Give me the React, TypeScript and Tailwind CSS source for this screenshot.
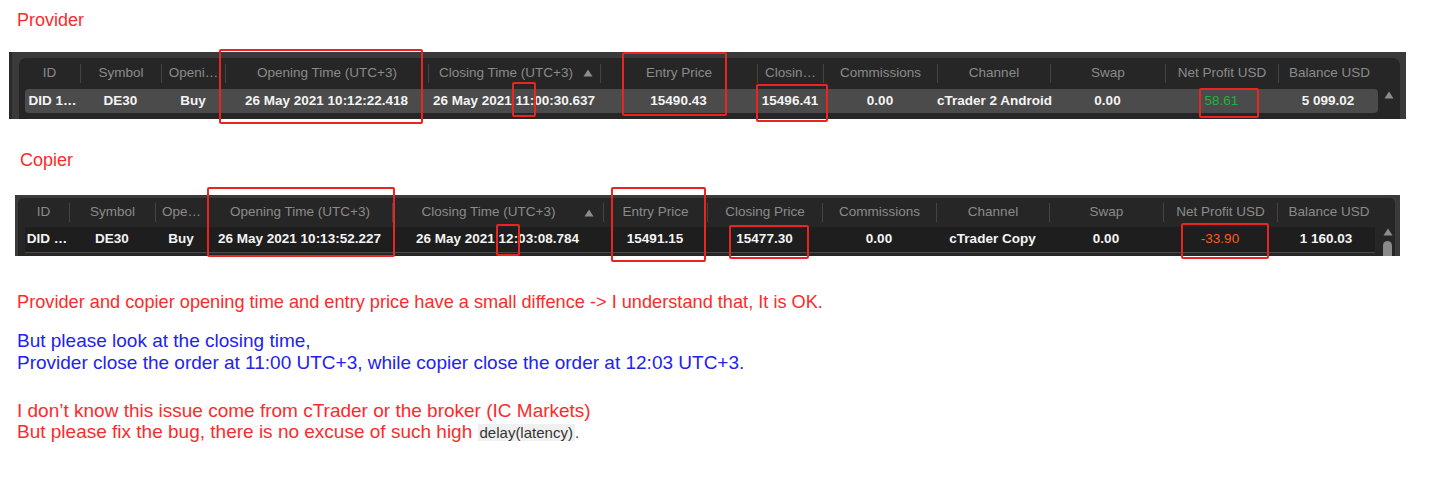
import React from "react";

type Col = {
  label: string;
  w: string;
  rw: string;
  value: string;
  tone?: string;
  sort?: string;
};

const providerCols: Col[] = [
  { label: "ID", w: "w-[61px]", rw: "w-[55px]", value: "DID 1…" },
  { label: "Symbol", w: "w-[81px]", rw: "w-[81px]", value: "DE30" },
  { label: "Openi…", w: "w-[64px]", rw: "w-[64px]", value: "Buy" },
  { label: "Opening Time (UTC+3)", w: "w-[203px]", rw: "w-[203px]", value: "26 May 2021 10:12:22.418" },
  { label: "Closing Time (UTC+3)", w: "w-[172px]", rw: "w-[172px]", value: "26 May 2021 11:00:30.637", sort: "mr-[7px]" },
  { label: "Entry Price", w: "w-[157px]", rw: "w-[157px]", value: "15490.43" },
  { label: "Closin…", w: "w-[66px]", rw: "w-[66px]", value: "15496.41" },
  { label: "Commissions", w: "w-[114px]", rw: "w-[114px]", value: "0.00" },
  { label: "Channel", w: "w-[113px]", rw: "w-[113px]", value: "cTrader 2 Android" },
  { label: "Swap", w: "w-[115px]", rw: "w-[115px]", value: "0.00" },
  { label: "Net Profit USD", w: "w-[113px]", rw: "w-[113px]", value: "58.61", tone: "font-normal text-[#1fb33c]" },
  { label: "Balance USD", w: "w-[102px]", rw: "w-[100px]", value: "5 099.02" },
];

const copierCols: Col[] = [
  { label: "ID", w: "w-[51px]", rw: "w-[44px]", value: "DID …" },
  { label: "Symbol", w: "w-[86px]", rw: "w-[86px]", value: "DE30" },
  { label: "Ope…", w: "w-[52px]", rw: "w-[52px]", value: "Buy" },
  { label: "Opening Time (UTC+3)", w: "w-[185px]", rw: "w-[185px]", value: "26 May 2021 10:13:52.227" },
  { label: "Closing Time (UTC+3)", w: "w-[211px]", rw: "w-[211px]", value: "26 May 2021 12:03:08.784", sort: "mr-[9px]" },
  { label: "Entry Price", w: "w-[104px]", rw: "w-[104px]", value: "15491.15" },
  { label: "Closing Price", w: "w-[115px]", rw: "w-[115px]", value: "15477.30" },
  { label: "Commissions", w: "w-[114px]", rw: "w-[114px]", value: "0.00" },
  { label: "Channel", w: "w-[113px]", rw: "w-[113px]", value: "cTrader Copy" },
  { label: "Swap", w: "w-[114px]", rw: "w-[114px]", value: "0.00" },
  { label: "Net Profit USD", w: "w-[114px]", rw: "w-[114px]", value: "-33.90", tone: "font-normal text-[#ff5a24]" },
  { label: "Balance USD", w: "w-[103px]", rw: "w-[98px]", value: "1 160.03" },
];

function Arrow() {
  return (
    <svg width="10" height="8" viewBox="0 0 10 8" className="shrink-0">
      <path d="M5 0.5 L9.5 7.5 L0.5 7.5 Z" fill="#8c8c8c" />
    </svg>
  );
}

function HeaderRow({ cols, h }: { cols: Col[]; h: string }) {
  return (
    <div className={`flex ${h}`}>
      {cols.map((c, i) => (
        <div key={c.label} className={`${c.w} flex items-center shrink-0`}>
          {i > 0 && <div className="w-px h-[19px] bg-[#444444] shrink-0" />}
          <span className="flex-1 text-center whitespace-nowrap text-[13.5px] text-[#8b8b8b]">
            {c.label}
          </span>
          {c.sort && (
            <span className={`${c.sort} flex items-center`}>
              <Arrow />
            </span>
          )}
        </div>
      ))}
    </div>
  );
}

function DataCells({ cols }: { cols: Col[] }) {
  return (
    <>
      {cols.map((c) => (
        <div
          key={c.label}
          className={`${c.rw} shrink-0 text-center whitespace-nowrap text-[13.5px] ${c.tone ?? "font-bold text-[#f4f4f4]"}`}
        >
          {c.value}
        </div>
      ))}
    </>
  );
}

function ProviderTable() {
  return (
    <div className="ml-[9px] w-[1397px] h-[67px] bg-[#3a3a3a] border-l-[3px] border-[#2a2a2a] pl-[7px] pt-[6px] pr-[6px]">
      <div className="h-[61px] bg-[#262626] rounded-t-[7px] flex">
        <div className="w-[1361px]">
          <HeaderRow cols={providerCols} h="h-[30px]" />
          <div className="mt-[1px] ml-[6px] w-[1353px] h-[24px] bg-[#4b4b4b] rounded-[4px] flex items-center">
            <DataCells cols={providerCols} />
          </div>
        </div>
        <div className="w-[20px] pt-[33px] pl-[4px]">
          <Arrow />
        </div>
      </div>
    </div>
  );
}

function CopierTable() {
  return (
    <div className="ml-[15px] w-[1385px] h-[61px] bg-[#3a3a3a] pl-[3px] pt-[3px] pr-[5px]">
      <div className="h-[58px] bg-[#262626] rounded-t-[5px] flex">
        <div className="w-[1362px]">
          <HeaderRow cols={copierCols} h="h-[29px]" />
          <div className="ml-[7px] w-[1350px] h-[26px] bg-[#1e1e1e] flex items-center border-b border-[#4a4a4a]">
            <DataCells cols={copierCols} />
          </div>
        </div>
        <div className="w-[15px] pt-[30px] pl-[3px] flex flex-col gap-[5px]">
          <Arrow />
          <div className="w-[9px] h-[20px] bg-[#8a8a8a] rounded-t-full" />
        </div>
      </div>
    </div>
  );
}

const boxes = [
  "left-[219px] top-[49px] w-[204px] h-[75px]",
  "left-[512px] top-[82px] w-[24px] h-[35px]",
  "left-[622px] top-[52px] w-[105px] h-[64px]",
  "left-[756px] top-[84px] w-[72px] h-[38px]",
  "left-[1199px] top-[88px] w-[60px] h-[30px]",
  "left-[207px] top-[187px] w-[188px] h-[70px]",
  "left-[496px] top-[224px] w-[24px] h-[32px]",
  "left-[611px] top-[187px] w-[95px] h-[75px]",
  "left-[729px] top-[225px] w-[80px] h-[34px]",
  "left-[1181px] top-[223px] w-[88px] h-[36px]",
];

export default function App() {
  return (
    <div className="relative min-h-[487px] bg-white font-['Liberation_Sans',Arial,sans-serif]">
      <div className="pl-[17px] pt-[9px] text-[18px] leading-[22px] text-[#fb2b2b]">Provider</div>
      <div className="mt-[21px]">
        <ProviderTable />
      </div>
      <div className="mt-[30px] pl-[20px] text-[18px] leading-[22px] text-[#fb2b2b]">Copier</div>
      <div className="mt-[24px]">
        <CopierTable />
      </div>

      <p className="mt-[35px] pl-[17px] text-[18.2px] leading-[22px] text-[#fb2b2b]">
        Provider and copier opening time and entry price have a small diffence -&gt; I understand that, It is OK.
      </p>
      <div className="mt-[17px] pl-[17px] text-[19px] leading-[22px] text-[#2222f0]">
        <p>But please look at the closing time,</p>
        <p>Provider close the order at 11:00 UTC+3, while copier close the order at 12:03 UTC+3.</p>
      </div>
      <div className="mt-[26px] pl-[17px] text-[19px] leading-[21px] text-[#fb2b2b]">
        <p>I don’t know this issue come from cTrader or the broker (IC Markets)</p>
        <p>
          But please fix the bug, there is no excuse of such high{" "}
          <span className="bg-[#f0f0f0] px-[2px] text-[15px] text-[#333333]">delay(latency)</span>
          <span className="text-[15px] text-[#333333]">.</span>
        </p>
      </div>

      {boxes.map((b) => (
        <div key={b} className={`absolute ${b} border-2 border-[#ea2420] rounded-[2px] pointer-events-none`} />
      ))}
    </div>
  );
}
